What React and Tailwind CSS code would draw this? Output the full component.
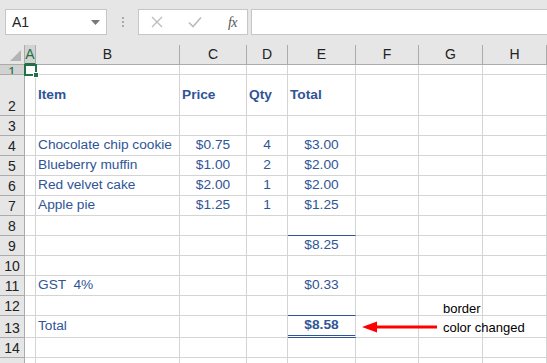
import React from "react";

const COLS = ["A", "B", "C", "D", "E", "F", "G", "H"];

// cells: key = column, t = text, b = bold, c = centered
const ROWS = [
  { n: 1, h: "h-[10px]" },
  {
    n: 2,
    h: "h-[41px]",
    cells: {
      B: { t: "Item", b: true },
      C: { t: "Price", b: true },
      D: { t: "Qty", b: true },
      E: { t: "Total", b: true },
    },
  },
  { n: 3, h: "h-[20px]" },
  { n: 4, h: "h-[20px]", cells: { B: { t: "Chocolate chip cookie" }, C: { t: "$0.75", c: true }, D: { t: "4", c: true }, E: { t: "$3.00", c: true } } },
  { n: 5, h: "h-[20px]", cells: { B: { t: "Blueberry muffin" }, C: { t: "$1.00", c: true }, D: { t: "2", c: true }, E: { t: "$2.00", c: true } } },
  { n: 6, h: "h-[20px]", cells: { B: { t: "Red velvet cake" }, C: { t: "$2.00", c: true }, D: { t: "1", c: true }, E: { t: "$2.00", c: true } } },
  { n: 7, h: "h-[20px]", cells: { B: { t: "Apple pie" }, C: { t: "$1.25", c: true }, D: { t: "1", c: true }, E: { t: "$1.25", c: true } } },
  { n: 8, h: "h-[20px]", cells: { E: { line: true } } },
  { n: 9, h: "h-[20px]", cells: { E: { t: "$8.25", c: true } } },
  { n: 10, h: "h-[20px]" },
  { n: 11, h: "h-[20px]", cells: { B: { t: "GST  4%", pre: true }, E: { t: "$0.33", c: true } } },
  { n: 12, h: "h-[20px]", cells: { E: { line: true } } },
  { n: 13, h: "h-[22px]", cells: { B: { t: "Total" }, E: { t: "$8.58", c: true, b: true, dbl: true } } },
  { n: 14, h: "h-[20px]" },
  { n: null, h: "h-[20px]" },
];

function Cell({ cell, h }) {
  let border = "border-r border-b border-[#d4d4d4]";
  if (cell?.line) border = "border-r border-[#d4d4d4] border-b border-b-[#2f5597]";
  if (cell?.dbl) border = "border-r border-r-[#d4d4d4] border-b-[3px] border-double border-b-[#2f5597]";
  return (
    <div
      className={`${h} ${border} flex items-center overflow-hidden whitespace-nowrap text-[13.7px] text-[#2f5597] ${
        cell?.c ? "justify-center" : "justify-start pl-[2px]"
      } ${cell?.b ? "font-bold" : ""} ${cell?.pre ? "whitespace-pre" : ""}`}
    >
      {cell?.t}
    </div>
  );
}

function Toolbar() {
  return (
    <div className="h-[45px] bg-[#e6e6e6] flex items-start pt-[9px] pl-[5px]">
      <div className="w-[102px] h-[26px] bg-white border border-[#c6c6c6] flex items-center justify-between pl-[6px] pr-[6px] text-[14px] text-[#222]">
        <span>A1</span>
        <svg width="9" height="5" viewBox="0 0 9 5">
          <path d="M0 0h9L4.5 5z" fill="#777" />
        </svg>
      </div>
      <div className="w-[31px] h-[26px] flex flex-col items-center justify-center gap-[2px]">
        <span className="w-[2px] h-[2px] bg-[#aaa]" />
        <span className="w-[2px] h-[2px] bg-[#aaa]" />
        <span className="w-[2px] h-[2px] bg-[#aaa]" />
      </div>
      <div className="w-[110px] h-[26px] bg-white border border-[#c6c6c6] flex items-center justify-between pl-[12px] pr-[10px]">
        <svg width="12" height="12" viewBox="0 0 12 12">
          <path d="M1 1l10 10M11 1L1 11" stroke="#bcbcbc" strokeWidth="1.3" />
        </svg>
        <svg width="14" height="12" viewBox="0 0 14 12">
          <path d="M1 6.5l4 4L13 1.5" stroke="#bcbcbc" strokeWidth="1.6" fill="none" />
        </svg>
        <span className="text-[14px] italic text-[#555] font-['Liberation_Serif',serif] tracking-[-0.5px]">fx</span>
      </div>
      <div className="flex-1 ml-[3px] h-[26px] bg-white border border-[#c6c6c6] border-r-0" />
    </div>
  );
}

export default function App() {
  return (
    <div className="w-[547px] h-[363px] overflow-hidden relative bg-white font-['Liberation_Sans',Arial,sans-serif]">
      <Toolbar />
      <div className="grid grid-cols-[25px_11px_144px_67px_41px_68px_63px_64px_64px]">
        {/* header row */}
        <div className="h-[20px] bg-[#e6e6e6] border-r border-b border-[#ababab] relative">
          <svg className="absolute right-[3px] bottom-[3px]" width="11" height="11" viewBox="0 0 11 11">
            <path d="M11 0v11H0z" fill="#b4b4b4" />
          </svg>
        </div>
        {COLS.map((c) => (
          <div
            key={c}
            className={`h-[20px] flex items-center justify-center text-[14px] border-r ${
              c === "A"
                ? "bg-[#d2d2d2] text-[#217346] border-b-2 border-b-[#217346] border-r-[#ababab]"
                : "bg-[#e6e6e6] text-[#222] border-b border-[#ababab]"
            }`}
          >
            {c}
          </div>
        ))}
        {ROWS.map((r, i) => (
          <React.Fragment key={i}>
            <div
              className={`${r.h} border-r border-b border-[#ababab] flex justify-center overflow-hidden text-[14px] ${
                r.n === 1
                  ? "bg-[#d2d2d2] text-[#217346] items-start leading-[14px]"
                  : "bg-[#e6e6e6] text-[#222] items-end leading-[18px]"
              }`}
            >
              {r.n}
            </div>
            {COLS.map((c) => (
              <Cell key={c} cell={r.cells?.[c]} h={r.h} />
            ))}
          </React.Fragment>
        ))}
      </div>

      {/* selected cell A1 */}
      <div className="absolute left-[24px] top-[64px] w-[13px] h-[12px] border-2 border-[#217346]" />
      <div className="absolute left-[33px] top-[72px] w-[6px] h-[6px] bg-[#217346] border border-white" />

      {/* annotation */}
      <div className="absolute left-[443px] top-[299px] text-[13px] leading-[19px] text-black">
        <div>border</div>
        <div>color changed</div>
      </div>
      <svg className="absolute left-[362px] top-[321px]" width="76" height="12" viewBox="0 0 76 12">
        <path d="M0 6L15 0.5V11.5z" fill="#ff0000" />
        <rect x="14" y="4.5" width="61" height="3" fill="#ff0000" />
      </svg>
    </div>
  );
}
